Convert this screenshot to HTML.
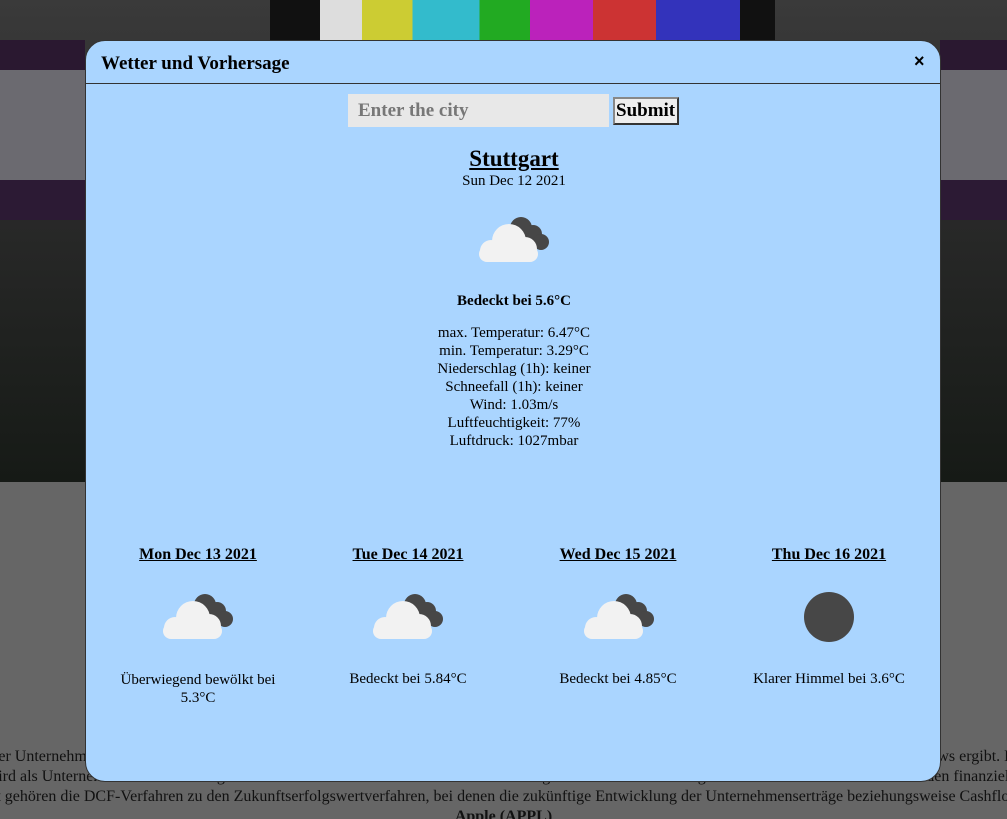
<!DOCTYPE html>
<html><head><meta charset="utf-8"><style>
*{margin:0;padding:0;box-sizing:border-box}
html,body{width:1007px;height:819px;overflow:hidden}
body{position:relative;background:#666;font-family:"Liberation Serif",serif;color:#000}
.bg{position:absolute;left:0;top:0;width:1007px;height:482px;background:linear-gradient(#3a3a3a,#2a2a2a 40%,#161a16)}
.abs{position:absolute}
.c{text-align:center}
.modal{position:absolute;left:85px;top:40px;width:856px;height:742px;background:#aad5ff;border:1px solid #333;border-radius:20px;overflow:hidden}
.under{text-decoration:underline}
.clip{position:absolute;left:0;top:740px;width:1007px;height:79px;overflow:hidden}
</style></head><body>
<div class="bg"></div>
<div class="abs" style="left:270px;top:0;width:505px;height:45px;background:#111"></div>
<div class="abs" style="left:320px;top:0;width:420px;height:40px;background:linear-gradient(90deg,#ddd 0,#ddd 10%,#cc3 10%,#cc3 22%,#3bc 22%,#3bc 38%,#2a2 38%,#2a2 50%,#b2b 50%,#b2b 65%,#c33 65%,#c33 80%,#33b 80%,#33b 100%)"></div>
<div class="abs" style="left:0;top:40px;width:85px;height:40px;background:#2a1830"></div>
<div class="abs" style="left:0;top:70px;width:85px;height:110px;background:#6b6a70"></div>
<div class="abs" style="left:0;top:180px;width:85px;height:40px;background:#2c1a34"></div>
<div class="abs" style="left:940px;top:40px;width:67px;height:40px;background:#2a1830"></div>
<div class="abs" style="left:940px;top:70px;width:67px;height:110px;background:#6b6a70"></div>
<div class="abs" style="left:940px;top:180px;width:67px;height:40px;background:#2c1a34"></div>
<div class="clip"><div class="abs" style="left:-600px;top:7px;width:2207px;font-size:16px;line-height:20px;color:#111;white-space:nowrap;text-align:center">
<div>Der Unternehmenswert ergibt sich aus der Nutzung aller Aktiva und Passiva betreffenden finanziellen Vorteile, die sich aus den zukünftigen Cashflows ergibt. Es</div>
<div>Das Unternehmen wird als Unternehmen als Bewertungseinheit verstanden und der Unternehmenswert ergibt sich aus der Nutzung aller Aktiva und Passiva betreffenden finanziellen Vorteile, die sich</div>
<div>Damit gehören die DCF-Verfahren zu den Zukunftserfolgswertverfahren, bei denen die zukünftige Entwicklung der Unternehmenserträge beziehungsweise Cashflows ab</div>
<div style="font-weight:bold">Apple (APPL)</div></div></div>
<div class="modal">
<div class="abs" style="left:15px;top:12px;font-size:19px;font-weight:bold">Wetter und Vorhersage</div>
<div class="abs" style="left:828px;top:10px;font-size:18px;font-weight:bold;font-family:'Liberation Sans',sans-serif">×</div>
<div class="abs" style="left:0;top:42px;width:856px;height:1px;background:#333"></div>
<div class="abs" style="left:262px;top:53px;width:261px;height:33px;background:#e8e8e8;font-size:19px;font-weight:bold;color:#777;padding:6px 10px">Enter the city</div>
<div class="abs" style="left:527px;top:56px;width:66px;height:28px;background:#eee;border:2px outset #888;font-size:19px;font-weight:bold;padding:0 0 0 1px;line-height:23px">Submit</div>
<div class="abs c under" style="left:0;width:856px;top:105px;font-size:23px;font-weight:bold">Stuttgart</div>
<div class="abs c" style="left:0;width:856px;top:132px;font-size:15px">Sun Dec 12 2021</div>
<div class="abs c" style="left:0;width:856px;top:252px;font-size:15px;font-weight:bold">Bedeckt bei 5.6°C</div>
<div class="abs c" style="left:0;width:856px;top:283px;font-size:15px;line-height:18px">max. Temperatur: 6.47°C<br>min. Temperatur: 3.29°C<br>Niederschlag (1h): keiner<br>Schneefall (1h): keiner<br>Wind: 1.03m/s<br>Luftfeuchtigkeit: 77%<br>Luftdruck: 1027mbar</div>
<svg class="abs" style="left:393px;top:175px" width="76" height="50" viewBox="0 0 76 50"><g fill="#474747"><circle cx="42" cy="12" r="11"/><circle cx="54" cy="18" r="9"/><circle cx="62" cy="26" r="8"/><circle cx="46" cy="26" r="9"/></g><g fill="#f2f2f2"><circle cx="30" cy="25" r="17"/><circle cx="46" cy="33" r="12"/><circle cx="12" cy="35" r="11"/><rect x="0" y="30" width="59" height="16" rx="8"/></g></svg>
<div class="abs c under" style="left:12px;width:200px;top:505px;font-size:16px;font-weight:bold">Mon Dec 13 2021</div>
<div class="abs c under" style="left:222px;width:200px;top:505px;font-size:16px;font-weight:bold">Tue Dec 14 2021</div>
<div class="abs c under" style="left:432px;width:200px;top:505px;font-size:16px;font-weight:bold">Wed Dec 15 2021</div>
<div class="abs c under" style="left:643px;width:200px;top:505px;font-size:16px;font-weight:bold">Thu Dec 16 2021</div>
<svg class="abs" style="left:77px;top:552px" width="76" height="50" viewBox="0 0 76 50"><g fill="#474747"><circle cx="42" cy="12" r="11"/><circle cx="54" cy="18" r="9"/><circle cx="62" cy="26" r="8"/><circle cx="46" cy="26" r="9"/></g><g fill="#f2f2f2"><circle cx="30" cy="25" r="17"/><circle cx="46" cy="33" r="12"/><circle cx="12" cy="35" r="11"/><rect x="0" y="30" width="59" height="16" rx="8"/></g></svg>
<svg class="abs" style="left:287px;top:552px" width="76" height="50" viewBox="0 0 76 50"><g fill="#474747"><circle cx="42" cy="12" r="11"/><circle cx="54" cy="18" r="9"/><circle cx="62" cy="26" r="8"/><circle cx="46" cy="26" r="9"/></g><g fill="#f2f2f2"><circle cx="30" cy="25" r="17"/><circle cx="46" cy="33" r="12"/><circle cx="12" cy="35" r="11"/><rect x="0" y="30" width="59" height="16" rx="8"/></g></svg>
<svg class="abs" style="left:498px;top:552px" width="76" height="50" viewBox="0 0 76 50"><g fill="#474747"><circle cx="42" cy="12" r="11"/><circle cx="54" cy="18" r="9"/><circle cx="62" cy="26" r="8"/><circle cx="46" cy="26" r="9"/></g><g fill="#f2f2f2"><circle cx="30" cy="25" r="17"/><circle cx="46" cy="33" r="12"/><circle cx="12" cy="35" r="11"/><rect x="0" y="30" width="59" height="16" rx="8"/></g></svg>
<div class="abs" style="left:718px;top:551px;width:50px;height:50px;border-radius:50%;background:#474747"></div>
<div class="abs c" style="left:22px;width:180px;top:630px;font-size:15px;line-height:18px">Überwiegend bewölkt bei 5.3°C</div>
<div class="abs c" style="left:222px;width:200px;top:630px;font-size:15px">Bedeckt bei 5.84°C</div>
<div class="abs c" style="left:432px;width:200px;top:630px;font-size:15px">Bedeckt bei 4.85°C</div>
<div class="abs c" style="left:643px;width:200px;top:630px;font-size:15px">Klarer Himmel bei 3.6°C</div>
</div>
</body></html>
